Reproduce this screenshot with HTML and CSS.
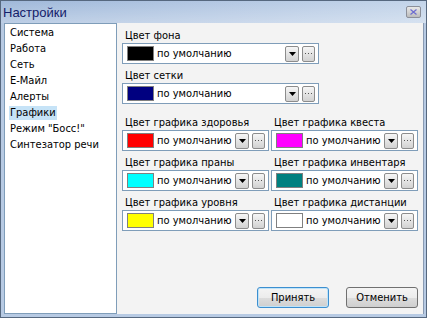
FILE: index.html
```html
<!DOCTYPE html>
<html lang="ru">
<head>
<meta charset="utf-8">
<title>Настройки</title>
<link rel="stylesheet" href="styles.css">
</head>
<body>
<div class="window">
  <div class="titlebar">
    <span class="title">Настройки</span>
    <span class="close"><svg width="7" height="6" viewBox="0 0 7 6"><path d="M0.5 0.5L6.5 5.5M6.5 0.5L0.5 5.5" stroke="#6b6bd0" stroke-width="1.2" fill="none"/></svg></span>
  </div>
  <div class="body">
    <ul class="list">
      <li><span>Система</span></li>
      <li><span>Работа</span></li>
      <li><span>Сеть</span></li>
      <li><span>Е-Майл</span></li>
      <li><span>Алерты</span></li>
      <li><span class="sel">Графики</span></li>
      <li><span>Режим "Босс!"</span></li>
      <li><span>Синтезатор речи</span></li>
    </ul>
    <div class="panel">
      <div class="field wide">
        <div class="label">Цвет фона</div>
        <div class="combo"><span class="swatch c-black"></span><span class="value">по умолчанию</span><span class="btn drop"><svg width="7" height="4" viewBox="0 0 7 4"><path d="M0 0H7L3.5 4Z" fill="#000"/></svg></span><span class="btn dots"><svg width="7" height="1" viewBox="0 0 7 1"><rect x="0" width="1" height="1" fill="#555"/><rect x="3" width="1" height="1" fill="#555"/><rect x="6" width="1" height="1" fill="#555"/></svg></span></div>
      </div>
      <div class="field wide last-wide">
        <div class="label">Цвет сетки</div>
        <div class="combo"><span class="swatch c-navy"></span><span class="value">по умолчанию</span><span class="btn drop"><svg width="7" height="4" viewBox="0 0 7 4"><path d="M0 0H7L3.5 4Z" fill="#000"/></svg></span><span class="btn dots"><svg width="7" height="1" viewBox="0 0 7 1"><rect x="0" width="1" height="1" fill="#555"/><rect x="3" width="1" height="1" fill="#555"/><rect x="6" width="1" height="1" fill="#555"/></svg></span></div>
      </div>
      <div class="grid">
        <div class="field">
          <div class="label">Цвет графика здоровья</div>
          <div class="combo"><span class="swatch c-red"></span><span class="value">по умолчанию</span><span class="btn drop"><svg width="7" height="4" viewBox="0 0 7 4"><path d="M0 0H7L3.5 4Z" fill="#000"/></svg></span><span class="btn dots"><svg width="7" height="1" viewBox="0 0 7 1"><rect x="0" width="1" height="1" fill="#555"/><rect x="3" width="1" height="1" fill="#555"/><rect x="6" width="1" height="1" fill="#555"/></svg></span></div>
        </div>
        <div class="field">
          <div class="label">Цвет графика квеста</div>
          <div class="combo"><span class="swatch c-magenta"></span><span class="value">по умолчанию</span><span class="btn drop"><svg width="7" height="4" viewBox="0 0 7 4"><path d="M0 0H7L3.5 4Z" fill="#000"/></svg></span><span class="btn dots"><svg width="7" height="1" viewBox="0 0 7 1"><rect x="0" width="1" height="1" fill="#555"/><rect x="3" width="1" height="1" fill="#555"/><rect x="6" width="1" height="1" fill="#555"/></svg></span></div>
        </div>
        <div class="field">
          <div class="label">Цвет графика праны</div>
          <div class="combo"><span class="swatch c-cyan"></span><span class="value">по умолчанию</span><span class="btn drop"><svg width="7" height="4" viewBox="0 0 7 4"><path d="M0 0H7L3.5 4Z" fill="#000"/></svg></span><span class="btn dots"><svg width="7" height="1" viewBox="0 0 7 1"><rect x="0" width="1" height="1" fill="#555"/><rect x="3" width="1" height="1" fill="#555"/><rect x="6" width="1" height="1" fill="#555"/></svg></span></div>
        </div>
        <div class="field">
          <div class="label">Цвет графика инвентаря</div>
          <div class="combo"><span class="swatch c-teal"></span><span class="value">по умолчанию</span><span class="btn drop"><svg width="7" height="4" viewBox="0 0 7 4"><path d="M0 0H7L3.5 4Z" fill="#000"/></svg></span><span class="btn dots"><svg width="7" height="1" viewBox="0 0 7 1"><rect x="0" width="1" height="1" fill="#555"/><rect x="3" width="1" height="1" fill="#555"/><rect x="6" width="1" height="1" fill="#555"/></svg></span></div>
        </div>
        <div class="field">
          <div class="label">Цвет графика уровня</div>
          <div class="combo"><span class="swatch c-yellow"></span><span class="value">по умолчанию</span><span class="btn drop"><svg width="7" height="4" viewBox="0 0 7 4"><path d="M0 0H7L3.5 4Z" fill="#000"/></svg></span><span class="btn dots"><svg width="7" height="1" viewBox="0 0 7 1"><rect x="0" width="1" height="1" fill="#555"/><rect x="3" width="1" height="1" fill="#555"/><rect x="6" width="1" height="1" fill="#555"/></svg></span></div>
        </div>
        <div class="field">
          <div class="label">Цвет графика дистанции</div>
          <div class="combo"><span class="swatch c-white"></span><span class="value">по умолчанию</span><span class="btn drop"><svg width="7" height="4" viewBox="0 0 7 4"><path d="M0 0H7L3.5 4Z" fill="#000"/></svg></span><span class="btn dots"><svg width="7" height="1" viewBox="0 0 7 1"><rect x="0" width="1" height="1" fill="#555"/><rect x="3" width="1" height="1" fill="#555"/><rect x="6" width="1" height="1" fill="#555"/></svg></span></div>
        </div>
      </div>
      <div class="actions">
        <button class="default">Принять</button>
        <button>Отменить</button>
      </div>
    </div>
  </div>
</div>
</body>
</html>
```
FILE: styles.css
```css
body {
  margin: 0;
  font-family: "DejaVu Sans Condensed", "DejaVu Sans", sans-serif;
  font-stretch: condensed;
  font-size: 11px;
  color: #000;
}

.window {
  width: 427px;
  height: 318px;
  box-sizing: border-box;
  border: 1px solid #56687f;
  background: #b7cae3;
  display: flex;
  flex-direction: column;
}

.titlebar {
  height: 22px;
  flex: none;
  display: flex;
  align-items: center;
  justify-content: space-between;
  padding: 0 5px 0 2px;
  background:
    linear-gradient(to bottom, rgba(255,255,255,0) 0%, rgba(255,255,255,0.3) 100%),
    linear-gradient(to right, #a0b9da 0%, #b4c8e3 55%, #c4d5ea 100%);
}

.title {
  font-family: "Liberation Sans", Arial, sans-serif;
  font-stretch: normal;
  font-size: 13px;
  color: #14206a;
}

.close {
  width: 15px;
  height: 12px;
  box-sizing: border-box;
  border: 1px solid #8b8f99;
  border-radius: 2px;
  background: linear-gradient(#e8e8e8, #bcbcbc);
  display: flex;
  align-items: center;
  justify-content: center;
}

.body {
  flex: 1;
  display: flex;
  margin: 0 2px 3px 3px;
  min-height: 0;
}

.list {
  width: 113px;
  flex: none;
  box-sizing: border-box;
  margin: 0;
  padding: 2px 0 0 0;
  list-style: none;
  background: #fff;
  border: 1px solid #7f9db9;
}

.list li {
  height: 16px;
  padding-left: 4px;
}

.list li span {
  display: inline-block;
  line-height: 14px;
  padding: 0 1px;
}

.list li .sel {
  background: #c6e3f7;
}

.panel {
  flex: 1;
  background: #f3f3f3;
  border-right: 1px solid #8a9bb3;
  padding: 5px 5px 6px 5px;
  display: flex;
  flex-direction: column;
}

.field {
  margin-bottom: 4px;
}

.field .label {
  height: 15px;
  line-height: 15px;
  padding-left: 3px;
  white-space: nowrap;
}

.wide .combo {
  width: 197px;
}

.last-wide {
  margin-bottom: 11px;
}

.grid {
  display: grid;
  grid-template-columns: 147px 147px;
  column-gap: 2px;
}

.combo {
  height: 21px;
  box-sizing: border-box;
  border: 1px solid #7f9db9;
  background: #fff;
  display: flex;
  align-items: center;
  padding: 0 3px 0 4px;
}

.swatch {
  width: 27px;
  height: 15px;
  box-sizing: border-box;
  border: 1px solid #808080;
  flex: none;
}

.c-black { background: #000000; }
.c-navy { background: #000080; }
.c-red { background: #ff0000; }
.c-magenta { background: #ff00ff; }
.c-cyan { background: #00ffff; }
.c-teal { background: #008080; }
.c-yellow { background: #ffff00; }
.c-white { background: #ffffff; }

.value {
  flex: 1;
  margin-left: 3px;
  white-space: nowrap;
  overflow: hidden;
}

.btn {
  width: 14px;
  height: 16px;
  box-sizing: border-box;
  border: 1px solid #8c8c8c;
  border-radius: 2px;
  background: linear-gradient(#f6f6f6, #d2d2d2);
  display: flex;
  align-items: center;
  justify-content: center;
  flex: none;
}

.btn.dots {
  width: 13px;
  margin-left: 3px;
}

.actions {
  margin-top: auto;
  display: flex;
  justify-content: flex-end;
  gap: 17px;
}

.actions button {
  width: 72px;
  height: 21px;
  padding: 0;
  font-family: "DejaVu Sans Condensed", "DejaVu Sans", sans-serif;
  font-stretch: condensed;
  font-size: 11px;
  color: #000;
  border: 1px solid #707070;
  border-radius: 3px;
  background: linear-gradient(#f4f4f4 0%, #ececec 50%, #dddddd 51%, #cfcfcf 100%);
}

.actions button.default {
  border-color: #3c8fd0;
  box-shadow: inset 0 0 0 1px #bfe3f8;
}
```
